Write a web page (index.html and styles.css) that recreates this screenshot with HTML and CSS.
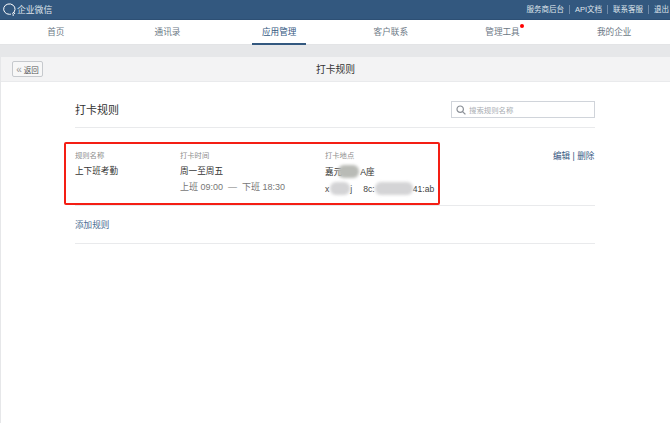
FILE: index.html
```html
<html>

<head>
  <title>打卡规则</title>
  <link rel="stylesheet" href="styles.css">
</head>

<body>

  <div class="topbar">
    <div class="logo">
      <svg width="15" height="15" viewBox="0 0 15 15">
        <path d="M10.2 11.6A5.7 5.2 0 1 0 7.4 12.3c.5 0 1-.05 1.5-.15" fill="none" stroke="#fff" stroke-width="1" />
        <circle cx="12.4" cy="11.2" r=".8" fill="#fff" />
        <circle cx="11.2" cy="13" r=".8" fill="#fff" />
      </svg>
      <span>企业微信</span>
    </div>
    <div class="toplinks">
      <a>服务商后台</a>
      <a>API文档</a>
      <a>联系客服</a>
      <a>退出</a>
    </div>
  </div>

  <div class="nav">
    <a class="nav-item">首页</a>
    <a class="nav-item">通讯录</a>
    <a class="nav-item active">应用管理</a>
    <a class="nav-item">客户联系</a>
    <a class="nav-item dot">管理工具</a>
    <a class="nav-item">我的企业</a>
  </div>

  <div class="page">
    <div class="page-head">
      <button class="back"><span class="back-arrow">«</span> 返回</button>
      <div class="page-title">打卡规则</div>
    </div>

    <div class="content">
      <div class="section-head">
        <h2>打卡规则</h2>
        <div class="search">
          <svg width="10" height="10" viewBox="0 0 10 10">
            <circle cx="4.2" cy="4.2" r="3.2" fill="none" stroke="#8a8f96" stroke-width="1.2" />
            <path d="M6.6 6.6L9.4 9.4" stroke="#8a8f96" stroke-width="1.3" />
          </svg>
          <span>搜索规则名称</span>
        </div>
      </div>

      <div class="rule">
        <div class="col col-name">
          <div class="label">规则名称</div>
          <div class="value">上下班考勤</div>
        </div>
        <div class="col col-time">
          <div class="label">打卡时间</div>
          <div class="value">周一至周五</div>
          <div class="sub">上班 09:00 &nbsp;— &nbsp;下班 18:30</div>
        </div>
        <div class="col col-place">
          <div class="label">打卡地点</div>
          <div class="value">嘉元<i class="mask mask-name"></i>A座</div>
          <div class="place-line">
            <span>x<i class="mask mask-ssid"></i>j</span>
            <span>8c:<i class="mask mask-mac"></i>41:ab</span>
          </div>
        </div>
        <div class="actions"><a>编辑</a> | <a>删除</a></div>
        <div class="highlight"></div>
      </div>

      <div class="add-row"><a>添加规则</a></div>
    </div>
  </div>

</body>

</html>
```

FILE: styles.css
```css
* {
  margin: 0;
  padding: 0;
  box-sizing: border-box;
  font-family: "Liberation Sans", "Noto Sans CJK SC", sans-serif;
}

body {
  background: #e6e7e9;
  height: 423px;
  overflow: hidden;
}

.topbar {
  height: 20px;
  background: #33587f;
  border-bottom: 1px solid #2d4f74;
  display: flex;
  align-items: center;
  justify-content: space-between;
  padding-left: 2px;
}

.logo {
  display: flex;
  align-items: center;
  font-size: 8.8px;
  color: #dfe5ec;
}

.toplinks {
  display: flex;
  font-size: 7.5px;
  color: #dfe5ec;
}

.toplinks a {
  padding: 0 5px;
  border-right: 1px solid #6f8aa8;
  line-height: 9px;
}

.toplinks a:last-child {
  border-right: 0;
  padding-right: 1px;
}

.nav {
  height: 25px;
  background: #fff;
  border-bottom: 1px solid #e3e4e6;
  display: grid;
  grid-template-columns: repeat(6, 1fr);
}

.nav-item {
  font-size: 8.6px;
  color: #6c7885;
  text-align: center;
  line-height: 24px;
  position: relative;
  justify-self: center;
  width: 54px;
}

.nav-item.active {
  color: #33587f;
  border-bottom: 2px solid #33587f;
  height: 25px;
}

.nav-item.dot::after {
  content: "";
  position: absolute;
  top: 4px;
  right: 5px;
  width: 4px;
  height: 4px;
  border-radius: 50%;
  background: #f00;
}

.page {
  padding: 12px 0 0 1px;
}

.page-head {
  height: 25px;
  background: #f3f3f4;
  border-bottom: 1px solid #e9eaec;
  position: relative;
  display: flex;
  align-items: center;
  justify-content: center;
}

.back {
  position: absolute;
  left: 11px;
  top: 4px;
  width: 31px;
  height: 16px;
  background: #f7f7f7;
  border: 1px solid #c6c9cd;
  border-radius: 2px;
  font-size: 7.5px;
  color: #555;
}

.back-arrow {
  font-size: 10px;
  line-height: 8px;
  color: #999;
}

.page-title {
  font-size: 9.8px;
  color: #333;
}

.content {
  background: #fff;
  height: 342px;
  padding: 0 75px 0 74px;
}

.section-head {
  height: 46px;
  border-bottom: 1px solid #e9eaec;
  display: flex;
  justify-content: space-between;
}

h2 {
  font-size: 11px;
  font-weight: normal;
  color: #333;
  line-height: 14px;
  margin-top: 21px;
}

.search {
  width: 144px;
  height: 17px;
  margin-top: 19px;
  border: 1px solid #d0d4da;
  display: flex;
  align-items: center;
  gap: 3px;
  padding-left: 4px;
  font-size: 7.4px;
  color: #a9adb2;
}

.rule {
  position: relative;
  height: 78px;
  border-bottom: 1px solid #e9eaec;
  display: flex;
  padding-top: 23px;
}

.col {
  flex: none;
}

.col-name {
  width: 105px;
}

.col-time {
  width: 145px;
}

.col-place {
  width: 228px;
}

.label {
  font-size: 7.3px;
  color: #8d8d8d;
  line-height: 10px;
}

.value {
  font-size: 8.6px;
  color: #333;
  line-height: 12px;
  margin-top: 4px;
  display: flex;
  align-items: center;
}

.sub {
  font-size: 9px;
  color: #777;
  line-height: 12px;
  margin-top: 4px;
}

.place-line {
  font-size: 8.6px;
  color: #444;
  line-height: 12px;
  margin-top: 4px;
  display: flex;
  gap: 11px;
}

.place-line span {
  display: flex;
  align-items: center;
}

.mask {
  display: inline-block;
  height: 13px;
  background: #d4d4d6;
  border-radius: 6px;
  filter: blur(1.5px);
}

.mask-name {
  width: 21px;
  background: #b9bbb6;
  margin: 0 1px 0 -4px;
}

.mask-ssid {
  width: 20px;
  margin-left: 1px;
}

.mask-mac {
  width: 38px;
}

.actions {
  font-size: 8.6px;
  color: #33587f;
  line-height: 10px;
  white-space: nowrap;
}

.highlight {
  position: absolute;
  left: -11px;
  top: 14px;
  width: 376px;
  height: 63px;
  border: 2px solid #f41e14;
  border-radius: 2px;
}

.add-row {
  height: 38px;
  border-bottom: 1px solid #e9eaec;
  font-size: 8.6px;
  color: #4a6d92;
  line-height: 38px;
}
```
